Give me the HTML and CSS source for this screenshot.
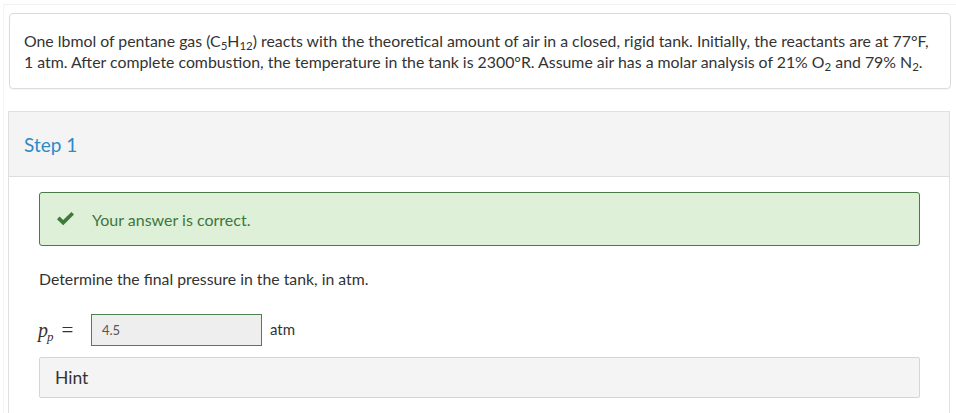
FILE: index.html
```html
<!DOCTYPE html>
<html>
<head>
<meta charset="utf-8">
<link rel="stylesheet" href="styles.css">
</head>
<body>
<div class="page">
  <div class="problem">
    One lbmol of pentane gas (C<sub>5</sub>H<sub>12</sub>) reacts with the theoretical amount of air in a closed, rigid tank. Initially, the reactants are at 77°F, 1 atm. After complete combustion, the temperature in the tank is 2300°R. Assume air has a molar analysis of 21% O<sub>2</sub> and 79% N<sub>2</sub>.
  </div>
  <div class="panel">
    <div class="panel-head">Step 1</div>
    <div class="panel-body">
      <div class="alert">
        <svg class="check" width="19" height="15" viewBox="0 0 19 15"><path d="M1 8.2 L3.6 5.6 L7.2 9.1 L15.4 1 L18 3.6 L7.2 14.3 Z" fill="#3d7a3c"/></svg>
        <span>Your answer is correct.</span>
      </div>
      <p class="question">Determine the final pressure in the tank, in atm.</p>
      <div class="answer-row">
        <span class="math"><i>p</i><sub><i>p</i></sub><span class="eq">=</span></span>
        <div class="input">4.5</div>
        <span class="unit">atm</span>
      </div>
      <div class="hint">Hint</div>
    </div>
  </div>
</div>
</body>
</html>
```

FILE: styles.css
```css
* { box-sizing: border-box; }
html, body { margin: 0; padding: 0; background: #fff; }
body {
  font-family: Lato, "Open Sans", sans-serif;
  color: #333;
  width: 956px;
  height: 413px;
  overflow: hidden;
}
.page {
  margin: 4px 0 0 3px;
  border-top: 1px solid #f2f2f2;
  border-left: 1px solid #f4f4f4;
  padding: 8px 5px 0 5px;
  height: 409px;
}
.problem {
  border: 1px solid #dcdcdc;
  border-radius: 4px;
  padding: 16px 18px 16px 14px;
  font-size: 15.85px;
  line-height: 21px;
  box-shadow: 0 1px 1px rgba(0,0,0,0.04);
}
.problem sub {
  font-size: 11.5px;
  line-height: 0;
  vertical-align: -3px;
}
.panel {
  margin-top: 22px;
  border: 1px solid #e0e0e0;
  border-bottom: none;
  margin-left: -1px;
  margin-right: 1px;
  height: 320px;
}
.panel-head {
  background: #f4f4f4;
  border-bottom: 1px solid #dedede;
  height: 65px;
  padding: 0 15px;
  display: flex;
  align-items: center;
  font-size: 19px;
  color: #2d8ac7;
}
.panel-body {
  padding: 15px 29px 0 30px;
}
.alert {
  background: #dff0d8;
  border: 1px solid #4b7a48;
  border-radius: 3px;
  height: 54px;
  display: flex;
  align-items: center;
  padding-left: 16px;
  font-size: 16px;
  color: #3c763d;
}
.check { margin-right: 17px; margin-top: -2px; }
.question {
  margin: 23px 0 0 0;
  font-size: 15.8px;
  line-height: 20px;
}
.answer-row {
  display: flex;
  align-items: flex-start;
  margin-top: 25px;
}
.math {
  font-family: "Liberation Serif", "DejaVu Serif", serif;
  font-size: 20px;
  color: #333;
  width: 52px;
  padding-top: 4px;
  margin-left: -1px;
}
.math sub { font-size: 13px; vertical-align: -4px; line-height: 0; margin-left: -1px; }
.math .eq { margin-left: 8px; font-style: normal; font-size: 21px; }
.input {
  width: 171px;
  height: 32px;
  background: #eee;
  border: 1px solid #4f7f4c;
  font-size: 13px;
  line-height: 30px;
  padding-left: 10px;
  color: #555;
  margin-left: 1px;
}
.unit {
  margin-left: 8px;
  font-size: 15px;
  line-height: 30px;
}
.hint {
  margin-top: 11px;
  background: #f4f4f4;
  border: 1px solid #d5d5d5;
  border-radius: 2px;
  height: 41px;
  display: flex;
  align-items: center;
  padding-left: 15px;
  font-size: 17.5px;
  color: #333;
}
```
